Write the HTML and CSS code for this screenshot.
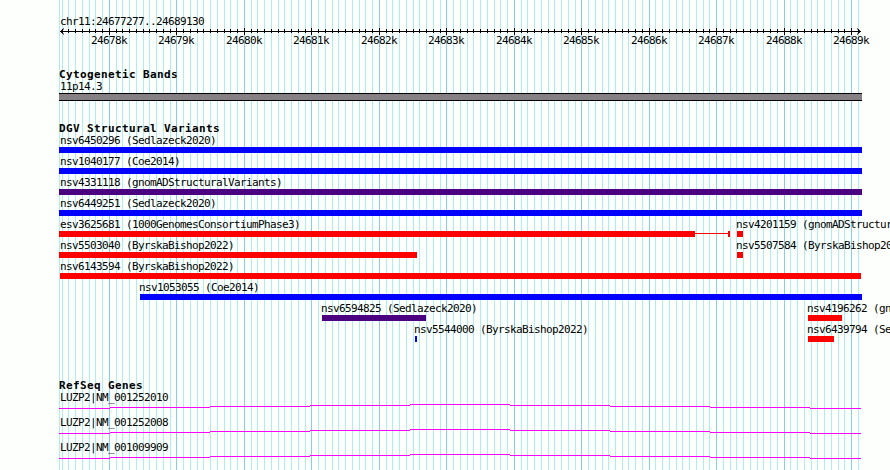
FILE: index.html
```
<!DOCTYPE html>
<html lang="en">
<head>
    <meta charset="UTF-8">
    <title>chr11:24677277..24689130</title>
    <link rel="stylesheet" href="styles.css">
</head>
<body>
    <div class="browser">
        <svg class="grid" id="grid" width="890" height="470"></svg>

        <div class="region">chr11:24677277..24689130</div>
        <svg class="ruler" id="ruler" width="890" height="20"></svg>

        <div class="track track-bands">
            <h3>Cytogenetic Bands</h3>
            <div class="label">11p14.3</div>
            <div class="band"></div>
        </div>

        <div class="track track-variants">
            <h3>DGV Structural Variants</h3>
            <div id="variants"></div>
        </div>

        <div class="track track-genes">
            <h3>RefSeq Genes</h3>
            <div id="genes"></div>
        </div>
    </div>

    <script src="script.js"></script>
</body>
</html>
```
FILE: styles.css
```
body {
    margin: 0;
    overflow: hidden;
    background: #fdfffc;
    color: #000;
    font-family: 'DejaVu Sans Mono', 'Liberation Mono', monospace;
    font-size: 11px;
    line-height: 12px;
    letter-spacing: -0.62px;
}
.browser {
    position: relative;
    width: 890px;
    height: 470px;
    overflow: hidden;
}
/* guide lines run behind all the tracks */
.grid {
    position: absolute;
    top: 0;
    left: 0;
    z-index: -1;
}
.grid-minor {
    fill: #afeeee;
}
.grid-major {
    fill: #87ceeb;
}
.region {
    padding: 16px 0 0 60px;
}
.ruler {
    display: block;
}
.arrow {
    fill: none;
    stroke: #000;
}
.track {
    padding-left: 59px;
}
.track h3 {
    margin: 0;
    font-size: 11px;
    line-height: 13px;
    letter-spacing: 0.38px;
}
.label {
    height: 12px;
    margin-left: 1px;
    white-space: nowrap;
}
.track-bands {
    margin-top: 20px;
}
.track-variants {
    margin-top: 21px;
}
.track-genes {
    margin-top: 34px;
}
.band {
    box-sizing: border-box;
    width: 803px;
    height: 8px;
    background: #848084;
    border-top: 1px solid #000;
    border-bottom: 1px solid #000;
}
.row {
    display: flex;
    height: 21px;
}
.feature {
    flex: none;
}
.feature .label {
    width: 0;
    margin-left: -1px;
}
.feature.at-edge .label {
    margin-left: 1px;
}
.feature.near-edge .label {
    margin-left: 0;
}
.bars {
    display: flex;
    align-items: flex-start;
}
.bar {
    height: 6px;
}
.connector {
    height: 1px;
    margin-top: 2px;
}
.gain {
    background: #0000ff;
}
.loss {
    background: #ff0000;
}
.complex {
    background: #4b0082;
}
.gene {
    height: 25px;
}
.gene svg {
    display: block;
    fill: #ff00ff;
}
```
FILE: script.js
```
const regionStart = 24677277;
const regionEnd = 24689130;
const left = 60;
const scale = 800 / (regionEnd - regionStart);

// position of a base on the page
function toX(pos) {
    return Math.round(left + (pos - regionStart) * scale);
}

function rect(x, y, w, h, cls) {
    return `<rect x="${x}" y="${y}" width="${w}" height="${h}" class="${cls || ''}"/>`;
}

// guide lines and ruler ticks, one for every 100 bases
function drawScale() {
    let minor = rect(59, 0, 1, 470, 'grid-minor');
    let major = '';
    let ticks = rect(60, 3, 801, 1);
    for (let pos = 24677300; pos <= regionEnd; pos += 100) {
        const x = toX(pos);
        if (pos % 1000 === 0) {
            major += rect(x, 0, 1, 470, 'grid-major');
            ticks += rect(x, 0, 1, 7);
            ticks += `<text x="${x - 18}" y="16">${pos / 1000}k</text>`;
        } else {
            minor += rect(x, 0, 1, 470, 'grid-minor');
            ticks += rect(x, 1, 1, 4);
        }
    }
    ticks += '<path class="arrow" d="M64 0.5L60.5 3.5L64 6.5M857 0.5L860.5 3.5L857 6.5"/>';
    document.getElementById('grid').innerHTML = minor + major;
    document.getElementById('ruler').innerHTML = ticks;
}

// each row holds features: name, type, start, end, optional linked end part
const rows = [
    [{ name: 'nsv6450296 (Sedlazeck2020)', type: 'gain', start: 59, end: 862 }],
    [{ name: 'nsv1040177 (Coe2014)', type: 'gain', start: 59, end: 862 }],
    [{ name: 'nsv4331118 (gnomADStructuralVariants)', type: 'complex', start: 59, end: 862 }],
    [{ name: 'nsv6449251 (Sedlazeck2020)', type: 'gain', start: 59, end: 862 }],
    [
        { name: 'esv3625681 (1000GenomesConsortiumPhase3)', type: 'loss', start: 59, end: 695, link: [728, 730] },
        { name: 'nsv4201159 (gnomADStructuralVariants)', type: 'loss', start: 737, end: 743 }
    ],
    [
        { name: 'nsv5503040 (ByrskaBishop2022)', type: 'loss', start: 59, end: 417 },
        { name: 'nsv5507584 (ByrskaBishop2022)', type: 'loss', start: 737, end: 743 }
    ],
    [{ name: 'nsv6143594 (ByrskaBishop2022)', type: 'loss', start: 60, end: 861 }],
    [{ name: 'nsv1053055 (Coe2014)', type: 'gain', start: 140, end: 862 }],
    [
        { name: 'nsv6594825 (Sedlazeck2020)', type: 'complex', start: 322, end: 426 },
        { name: 'nsv4196262 (gnomADStructuralVariants)', type: 'loss', start: 808, end: 842 }
    ],
    [
        { name: 'nsv5544000 (ByrskaBishop2022)', type: 'gain', start: 415, end: 417 },
        { name: 'nsv6439794 (Sedlazeck2020)', type: 'loss', start: 808, end: 834 }
    ]
];

function drawVariants() {
    document.getElementById('variants').innerHTML = rows.map(row => {
        let x = 59;
        const features = row.map(f => {
            const gap = f.start - x;
            x = f.end;
            let bars = `<div class="bar ${f.type}" style="width:${f.end - f.start}px"></div>`;
            if (f.link) {
                bars += `<div class="connector ${f.type}" style="width:${f.link[0] - f.end}px"></div>`;
                bars += `<div class="bar ${f.type}" style="width:${f.link[1] - f.link[0]}px"></div>`;
                x = f.link[1];
            }
            const edge = f.start === 59 ? 'at-edge' : f.start === 60 ? 'near-edge' : '';
            return `<div class="feature ${edge}" style="margin-left:${gap}px">
                <div class="label">${f.name}</div>
                <div class="bars">${bars}</div>
            </div>`;
        }).join('');
        return `<div class="row">${features}</div>`;
    }).join('');
}

const genes = ['LUZP2|NM_001252010', 'LUZP2|NM_001252008', 'LUZP2|NM_001009909'];

// introns are drawn as a shallow stepped arch
function drawGenes() {
    const steps = [0, 51, 151, 251, 351, 451, 551, 651, 751, 802];
    let line = '';
    for (let i = 0; i < steps.length - 1; i++) {
        line += rect(steps[i], Math.abs(i - 4), steps[i + 1] - steps[i], 1);
    }
    document.getElementById('genes').innerHTML = genes.map(name => `
        <div class="gene">
            <div class="label">${name}</div>
            <svg width="802" height="5">${line}</svg>
        </div>
    `).join('');
}

drawScale();
drawVariants();
drawGenes();
```
